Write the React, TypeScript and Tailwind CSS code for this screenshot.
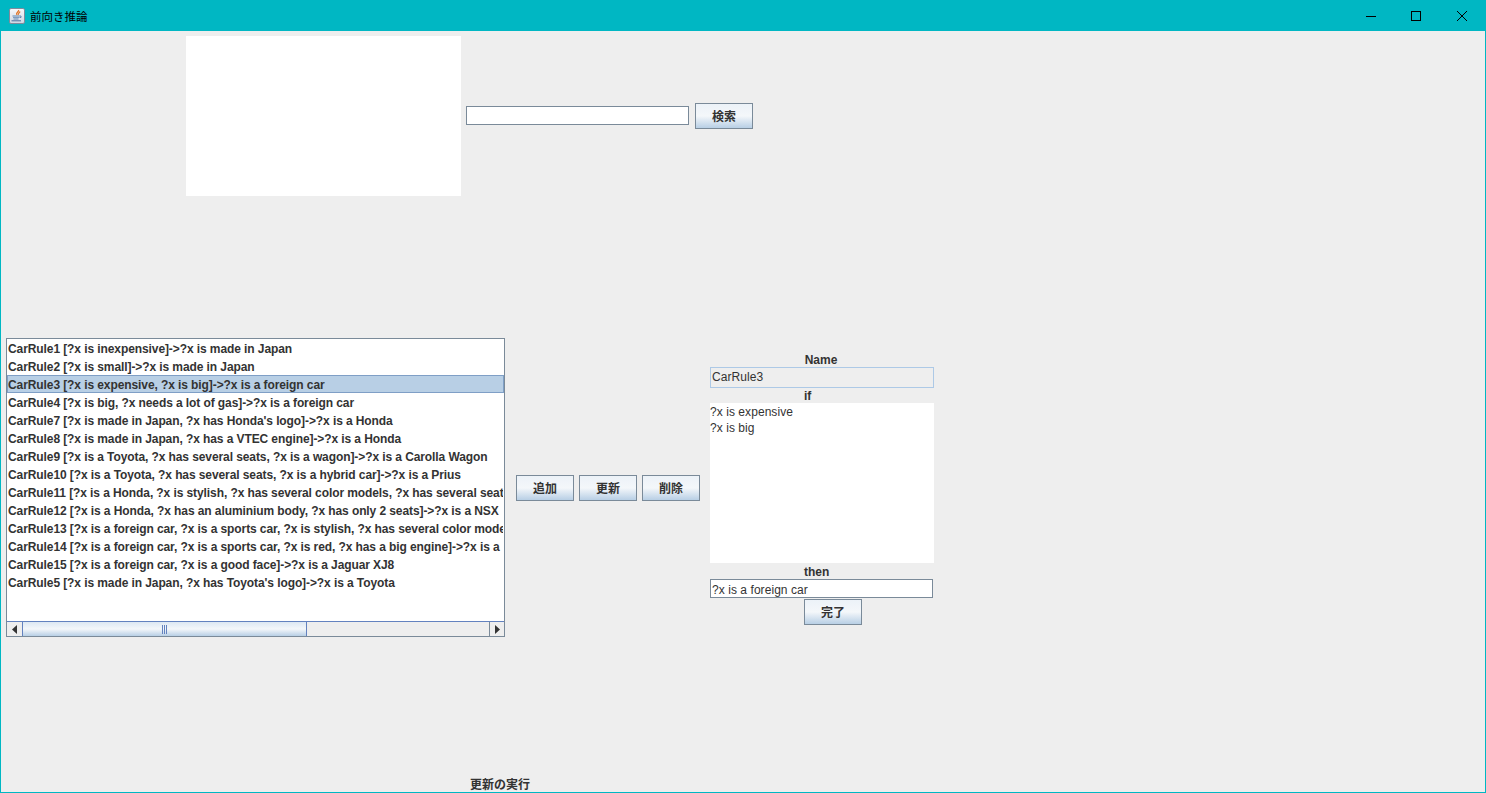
const latin = "font-['Liberation_Sans','Noto_Sans_CJK_JP',sans-serif]";

const rules = [
  "CarRule1 [?x is inexpensive]->?x is made in Japan",
  "CarRule2 [?x is small]->?x is made in Japan",
  "CarRule3 [?x is expensive, ?x is big]->?x is a foreign car",
  "CarRule4 [?x is big, ?x needs a lot of gas]->?x is a foreign car",
  "CarRule7 [?x is made in Japan, ?x has Honda's logo]->?x is a Honda",
  "CarRule8 [?x is made in Japan, ?x has a VTEC engine]->?x is a Honda",
  "CarRule9 [?x is a Toyota, ?x has several seats, ?x is a wagon]->?x is a Carolla Wagon",
  "CarRule10 [?x is a Toyota, ?x has several seats, ?x is a hybrid car]->?x is a Prius",
  "CarRule11 [?x is a Honda, ?x is stylish, ?x has several color models, ?x has several seats",
  "CarRule12 [?x is a Honda, ?x has an aluminium body, ?x has only 2 seats]->?x is a NSX",
  "CarRule13 [?x is a foreign car, ?x is a sports car, ?x is stylish, ?x has several color mode",
  "CarRule14 [?x is a foreign car, ?x is a sports car, ?x is red, ?x has a big engine]->?x is a",
  "CarRule15 [?x is a foreign car, ?x is a good face]->?x is a Jaguar XJ8",
  "CarRule5 [?x is made in Japan, ?x has Toyota's logo]->?x is a Toyota",
];

function JButton({ label }: { label: string }) {
  return (
    <button className="w-[58px] h-[26px] pt-[2px] shrink-0 border border-[#7a8a99] bg-gradient-to-b from-[#ecf2f8] via-[#f4f7fa] to-[#b8cfe5] text-[12px] leading-[14px] font-bold text-[#333333] flex items-center justify-center">
      {label}
    </button>
  );
}

function JavaIcon() {
  return (
    <svg width="16" height="16" viewBox="0 0 16 16" className="shrink-0">
      <defs>
        <linearGradient id="javaBg" x1="0" y1="0" x2="0" y2="1">
          <stop offset="0" stopColor="#f7f8fb" />
          <stop offset="1" stopColor="#cfd6e2" />
        </linearGradient>
      </defs>
      <rect x="0.5" y="0.5" width="15" height="15" rx="1.5" fill="url(#javaBg)" stroke="#7f8a9c" />
      <path d="M9.500 2c1 1.700-3 2.600-1.700 4.800M11 3.500c-.6 1.500-2.200 2-1.700 3.500" fill="none" stroke="#e0762a" strokeWidth="1.300" />
      <path d="M3.500 8h7" stroke="#5f86b3" strokeWidth="1" />
      <path d="M4 9.500h6" stroke="#7f9cc0" strokeWidth="1" />
      <path d="M4.500 11h5" stroke="#5f86b3" strokeWidth="1" />
      <path d="M10.500 8h1.500v1.500h-1.500" fill="none" stroke="#5f86b3" />
      <path d="M2.500 12.800h9.500" stroke="#4a6f9e" strokeWidth="1" />
    </svg>
  );
}

function Scrollbar() {
  return (
    <div className="h-[15px] flex bg-[#eeeeee] border-t border-[#6382bf] shrink-0">
      <div className="w-[16px] flex items-center justify-center border-r border-[#6382bf]">
        <svg width="5" height="9" viewBox="0 0 5 9"><path d="M5 0v9L0 4.500z" fill="#333333" /></svg>
      </div>
      <div className="w-[284px] border-r border-[#6382bf] bg-gradient-to-b from-[#dde8f3] via-[#f4f7fa] to-[#b8cfe5] flex items-center justify-center gap-[1px]">
        <div className="w-[1px] h-[9px] bg-[#6382bf]" />
        <div className="w-[1px] h-[9px] bg-[#6382bf]" />
        <div className="w-[1px] h-[9px] bg-[#6382bf]" />
      </div>
      <div className="flex-1" />
      <div className="w-[15px] flex items-center justify-center border-l border-[#7a8a99]">
        <svg width="5" height="9" viewBox="0 0 5 9"><path d="M0 0v9l5-4.500z" fill="#333333" /></svg>
      </div>
    </div>
  );
}

export default function App() {
  return (
    <div className={`w-[1486px] h-[793px] overflow-hidden border border-[#00b7c3] bg-[#eeeeee] flex flex-col ${latin}`}>
      {/* title bar */}
      <div className="h-[30px] -mt-[1px] pt-[1px] -mx-[1px] pl-[9px] pr-[1px] bg-[#00b7c3] flex items-center shrink-0 box-content">
        <JavaIcon />
        <span className="ml-[5px] mt-[4px] text-[11.5px] text-black">前向き推論</span>
        <div className="ml-auto flex items-center text-black">
          <div className="w-[45px] h-[29px] flex items-center justify-center">
            <div className="w-[10px] h-[1px] bg-black" />
          </div>
          <div className="w-[46px] h-[29px] flex items-center justify-center">
            <div className="w-[10px] h-[10px] border border-black" />
          </div>
          <div className="w-[46px] h-[29px] flex items-center justify-center">
            <svg width="10" height="10" viewBox="0 0 10 10"><path d="M0 0l10 10M10 0L0 10" stroke="black" strokeWidth="1" /></svg>
          </div>
        </div>
      </div>

      {/* search row */}
      <div className="mt-[5px] pl-[185px] h-[160px] flex items-center shrink-0">
        <div className="w-[275px] h-[160px] bg-white" />
        <div className="ml-[5px] mb-[1px] w-[223px] h-[19px] border border-[#7a8a99] bg-white" />
        <div className="ml-[6px]"><JButton label="検索" /></div>
      </div>

      {/* editor row */}
      <div className="mt-[142px] pl-[5px] flex items-start shrink-0 text-[#333333]">
        <div className="w-[499px] h-[299px] border border-[#7a8a99] bg-white flex flex-col">
          <div className="flex-1 min-h-0 overflow-hidden">
            {rules.map((r) => (
              <div
                key={r}
                className={`h-[18px] leading-[18px] text-[12px] font-bold tracking-[-0.09px] whitespace-nowrap overflow-hidden border ${r.startsWith("CarRule3 ") ? "bg-[#b8cfe5] border-[#7f9fc6]" : "border-transparent"}`}
              >
                {r}
              </div>
            ))}
          </div>
          <Scrollbar />
        </div>

        <div className="ml-[11px] mt-[137px] flex gap-[5px]">
          <JButton label="追加" />
          <JButton label="更新" />
          <JButton label="削除" />
        </div>

        <div className="ml-[10px] mt-[13px] w-[224px] flex flex-col text-[12px]">
          <div className="h-[16px] leading-[18px] font-bold text-center pr-[2px]">Name</div>
          <div className="h-[21px] border border-[#adc9e6] bg-[#eeeeee] pl-[1px] leading-[19px] tracking-[0.06px]">CarRule3</div>
          <div className="h-[15px] leading-[17px] font-bold pl-[94px]">if</div>
          <div className="h-[160px] bg-white leading-[16px] pt-[1px] tracking-[0.06px]">
            <div>?x is expensive</div>
            <div>?x is big</div>
          </div>
          <div className="h-[16px] leading-[19px] font-bold pl-[94px]">then</div>
          <div className="w-[223px] h-[19px] border border-[#7a8a99] bg-white pl-[1px] leading-[20px] tracking-[0.06px]">?x is a foreign car</div>
          <div className="mt-[1px] pl-[94px]"><JButton label="完了" /></div>
        </div>
      </div>

      {/* status label */}
      <div className="mt-[141px] pl-[469px] text-[12px] font-bold text-[#333333] leading-[14px]">更新の実行</div>
    </div>
  );
}
